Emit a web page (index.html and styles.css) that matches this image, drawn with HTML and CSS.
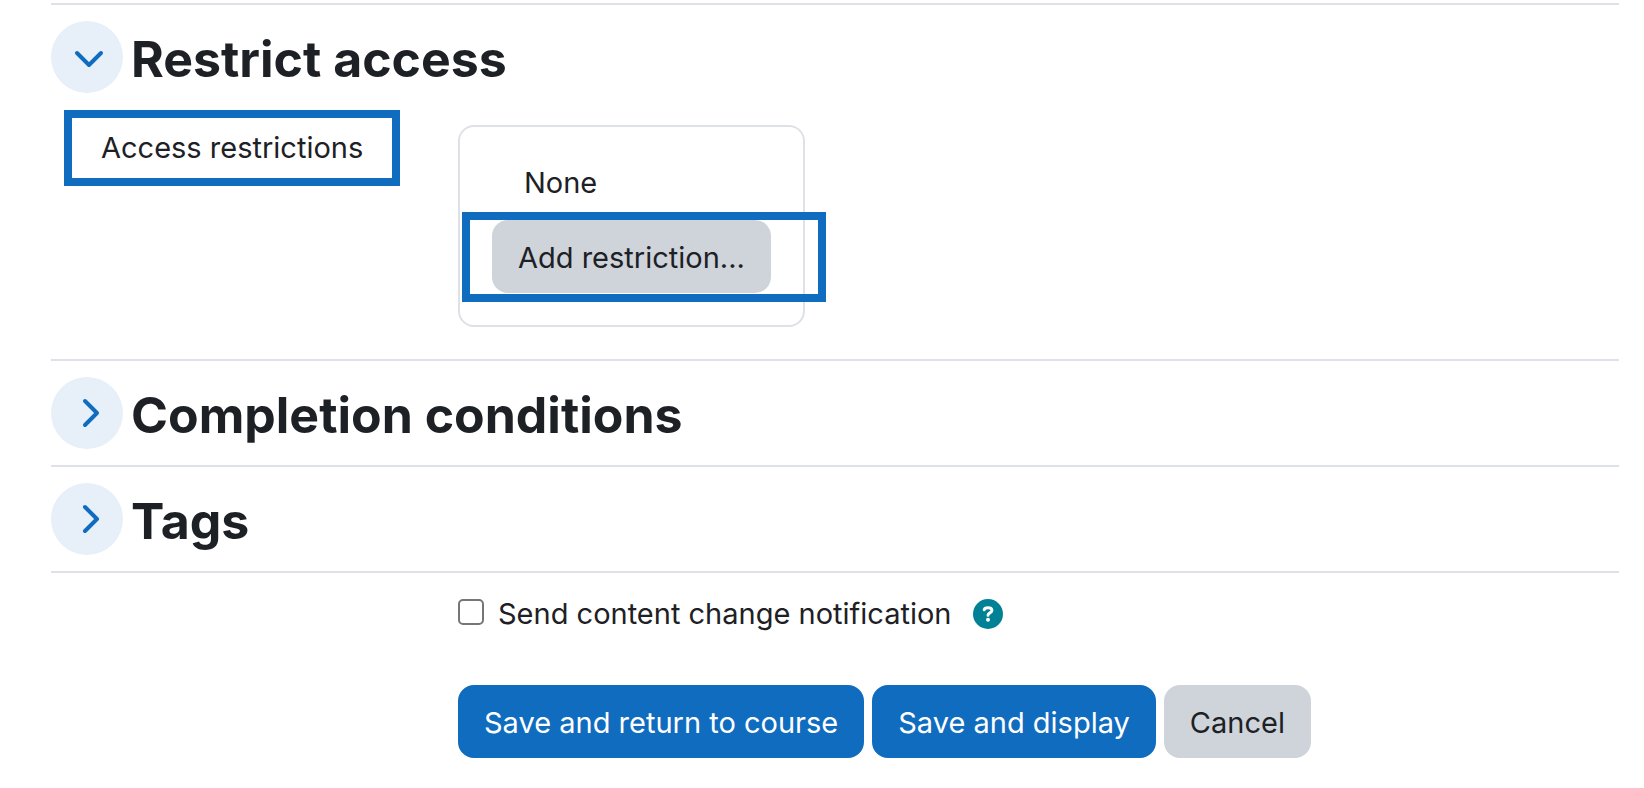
FILE: index.html
```html
<!DOCTYPE html>
<html lang="en">
  <head>
    <meta charset="utf-8">
    <title>Activity settings</title>
    <link rel="stylesheet" href="styles.css">
  </head>
  <body>

    <form class="settings">

      <section class="section">
        <div class="section-header">
          <button type="button" class="toggle" aria-label="Collapse Restrict access" aria-expanded="true">
            <svg class="chevron" viewBox="0 0 28 28"><path d="M2 8 L14 20 L26 8"/></svg>
          </button>
          <h3>Restrict access</h3>
        </div>
        <div class="row">
          <div class="label-cell">
            <span class="highlight" id="access-label">Access restrictions</span>
          </div>
          <div class="restrictions" role="group" aria-labelledby="access-label">
            <p>None</p>
            <div class="add">
              <button type="button" class="btn secondary">Add restriction...</button>
            </div>
          </div>
        </div>
      </section>

      <section class="section">
        <div class="section-header">
          <button type="button" class="toggle" aria-label="Expand Completion conditions" aria-expanded="false">
            <svg class="chevron" viewBox="0 0 28 28"><path d="M10 0 L22 12 L10 24"/></svg>
          </button>
          <h3>Completion conditions</h3>
        </div>
      </section>

      <section class="section">
        <div class="section-header">
          <button type="button" class="toggle" aria-label="Expand Tags" aria-expanded="false">
            <svg class="chevron" viewBox="0 0 28 28"><path d="M10 0 L22 12 L10 24"/></svg>
          </button>
          <h3>Tags</h3>
        </div>
      </section>

      <div class="footer">
        <div class="notify">
          <input type="checkbox" id="notification">
          <label for="notification">Send content change notification</label>
          <button type="button" class="help" aria-label="Help">
            <svg viewBox="0 0 30 30">
              <circle cx="15" cy="15" r="15" fill="#008196"/>
              <path d="M11.2 10.8 C11.5 9.2 12.8 8.7 15 8.7 C17.4 8.7 18.9 9.7 18.9 11.6 C18.9 14 15 13.8 15 16.2" fill="none" stroke="#fff" stroke-width="3" stroke-linecap="round"/>
              <circle cx="15" cy="20.8" r="2" fill="#fff"/>
            </svg>
          </button>
        </div>
        <div class="actions">
          <button type="submit" class="btn primary">Save and return to course</button>
          <button type="submit" class="btn primary">Save and display</button>
          <button type="button" class="btn secondary">Cancel</button>
        </div>
      </div>

    </form>

  </body>
</html>
```

FILE: styles.css
```css
* {
  box-sizing: border-box;
}

body {
  margin: 0;
  font-family: Inter, "Liberation Sans", sans-serif;
  font-size: 29px;
  line-height: 45px;
  color: #1d2125;
  background-color: #fff;
}

.settings {
  padding: 3px 25px 30px 51px;
}

/* Sections */

.section {
  border-top: 2px solid #dee2e6;
  padding: 16px 0;
}

.section-header {
  display: flex;
  align-items: center;
  gap: 8px;
}

h3 {
  margin: 0;
  padding-top: 4px;
  font-size: 50px;
  line-height: 68px;
  font-weight: 700;
}

.toggle {
  display: flex;
  align-items: center;
  justify-content: center;
  width: 72px;
  height: 72px;
  padding: 4px 0 0 4px;
  border: none;
  border-radius: 50%;
  background-color: #e7eff9;
}

.chevron {
  width: 28px;
  height: 28px;
  overflow: visible;
  fill: none;
  stroke: #0f6cbf;
  stroke-width: 4;
  stroke-linecap: round;
  stroke-linejoin: round;
}

/* Access restrictions */

.row {
  display: grid;
  grid-template-columns: 407px 1fr;
  align-items: start;
}

.label-cell {
  padding: 17px 0 0 13px;
}

.highlight {
  display: inline-block;
  padding: 7px 29px 8px;
  border: 8px solid #0f6cbf;
}

.restrictions {
  justify-self: start;
  margin: 32px 0 16px;
  padding: 32px;
  border: 2px solid #dee2e6;
  border-radius: 16px;
}

.restrictions p {
  margin: 0;
  padding: 1px 32px 15px;
}

.add {
  position: relative;
}

.add::after {
  content: "";
  position: absolute;
  top: -8px;
  bottom: -9px;
  left: -30px;
  right: -55px;
  border: 8px solid #0f6cbf;
  pointer-events: none;
}

/* Buttons */

.btn {
  padding: 13px 24px 11px;
  border: 2px solid transparent;
  border-radius: 16px;
  font: inherit;
}

.primary {
  background-color: #0f6cbf;
  border-color: #0f6cbf;
  color: #fff;
}

.secondary {
  background-color: #ced4da;
  border-color: #ced4da;
  color: #1d2125;
}

.add .btn {
  display: block;
}

/* Footer */

.footer {
  padding: 18px 0 0 407px;
  border-top: 2px solid #dee2e6;
}

.notify {
  display: flex;
  align-items: center;
}

.notify input {
  appearance: none;
  width: 26px;
  height: 26px;
  margin: 0 14px 4px 0;
  border: 2px solid #767676;
  border-radius: 5px;
  background-color: #fff;
}

.help {
  width: 30px;
  height: 30px;
  margin-left: 22px;
  padding: 0;
  border: none;
  background: none;
}

.help svg {
  display: block;
}

.actions {
  display: flex;
  flex-wrap: wrap;
  gap: 8px;
  margin-top: 49px;
}
```
